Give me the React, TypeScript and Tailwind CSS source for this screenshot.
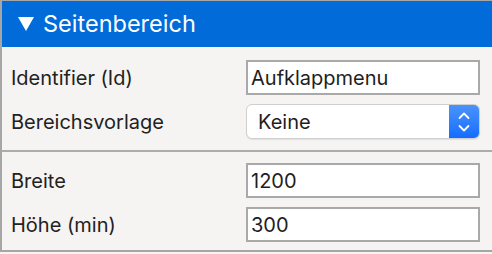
import React from "react";

const font = { fontFamily: "Inter, 'Liberation Sans', sans-serif" };

function TextRow({ label, value }: { label: string; value: string }) {
  return (
    <div className="flex items-center h-[35px]">
      <div className="w-[244px] pl-[9px] text-[20px] text-[#222]">{label}</div>
      <div className="w-[234px] h-[35px] border-2 border-[#a9a9a9] bg-white flex items-center pl-[3px] text-[20px] text-[#1e1e1e]">
        {value}
      </div>
    </div>
  );
}

export default function App() {
  return (
    <div className="w-[492px] h-[254px] bg-[#f6f4f2]" style={font}>
      <div className="h-[252px] border-t border-l-2 border-b-2 border-[#a6a6a6] flex flex-col">
        <div className="h-[46px] bg-[#006bd9] flex items-center pl-[16px] text-white text-[23.5px]">
          <svg width="16" height="15" viewBox="0 0 16 15" className="mr-[9px]">
            <polygon points="0,0 16,0 8,14" fill="white" />
          </svg>
          <span>Seitenbereich</span>
        </div>
        <div className="flex flex-col gap-[9px] pt-[13px] pb-[11px]">
          <TextRow label="Identifier (Id)" value="Aufklappmenu" />
          <div className="flex items-center h-[35px]">
            <div className="w-[244px] pl-[9px] text-[20px] text-[#222]">Bereichsvorlage</div>
            <div className="w-[234px] h-[35px] rounded-[6px] border border-[#cfcfcf] bg-white flex overflow-hidden shadow-[0_1px_1px_rgba(0,0,0,0.08)]">
              <div className="flex-1 flex items-center pl-[11px] text-[20px] text-[#1e1e1e]">Keine</div>
              <div className="w-[30px] h-full bg-gradient-to-b from-[#4a93fb] to-[#136cff] flex items-center justify-center">
                <svg width="12" height="22" viewBox="0 0 12 22" fill="none" stroke="white" strokeWidth="1.8" strokeLinecap="round" strokeLinejoin="round">
                  <polyline points="1.5,7 6,2.5 10.5,7" />
                  <polyline points="1.5,15 6,19.5 10.5,15" />
                </svg>
              </div>
            </div>
          </div>
        </div>
        <div className="h-[2px] bg-[#acacac]" />
        <div className="flex flex-col gap-[9px] pt-[11px]">
          <TextRow label="Breite" value="1200" />
          <TextRow label="Höhe (min)" value="300" />
        </div>
      </div>
    </div>
  );
}
